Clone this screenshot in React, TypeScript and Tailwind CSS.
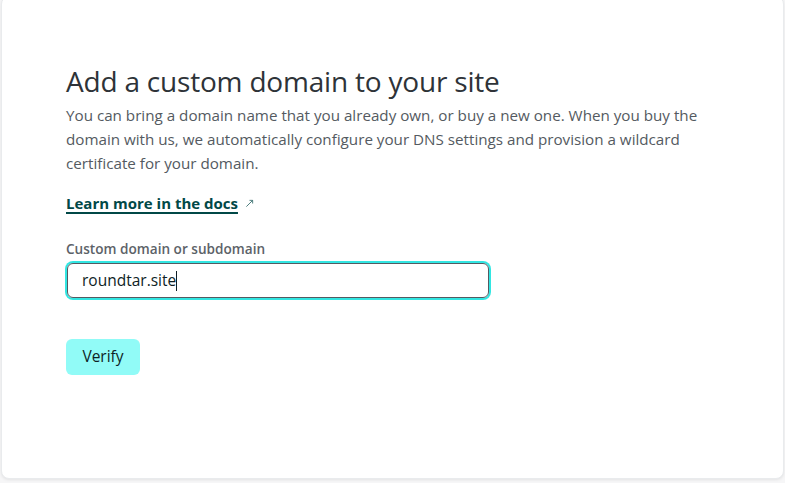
export default function App() {
    return (
        <div className="min-h-screen bg-[#f6f6f7] font-['Open_Sans',sans-serif]">
            <div className="h-[483px] flex flex-col px-[1px]">
                <div className="h-[483px] -mt-[4px] bg-white rounded-lg border border-[#e9ebed] shadow-[0_1px_3px_rgba(0,0,0,0.08)]">
                    <div className="pt-[66px] pl-[64px]">
                        <h1 className="text-[28px] leading-[36px] text-[#2e3338] tracking-[-0.2px]">
                            Add a custom domain to your site
                        </h1>
                        <p className="mt-[4px] w-[670px] text-[15.2px] leading-[24px] text-[#545a61]">
                            You can bring a domain name that you already own, or buy a new one. When you buy the domain with us, we automatically configure your DNS settings and provision a wildcard certificate for your domain.
                        </p>
                        <div className="mt-[16px] flex items-center gap-[7px]">
                            <a className="text-[15px] leading-[24px] font-bold text-[#014847] underline underline-offset-[3px] decoration-[1.5px]">
                                Learn more in the docs
                            </a>
                            <svg width="9" height="9" viewBox="0 0 10 10" className="text-[#3b7070] mt-[1px]">
                                <path d="M1.5 8.5L8.5 1.5M5 1.5H8.5V5" fill="none" stroke="currentColor" strokeWidth="1" />
                            </svg>
                        </div>
                        <label className="block mt-[24px] text-[13.6px] leading-[20px] font-semibold text-[#5c6268]">
                            Custom domain or subdomain
                        </label>
                        <div className="mt-[4px] ml-[1px] w-[422px] h-[35px] rounded-[6px] border border-[#545a61] ring-2 ring-[#32e6e2] flex items-center pl-[14px] text-[15.5px] text-[#0e1e25]">
                            roundtar.site<span className="inline-block w-px h-[20px] bg-[#0e1e25]" />
                        </div>
                        <button className="mt-[41px] h-[36px] w-[74px] rounded-[6px] bg-[#91fbf7] text-[15.5px] text-[#0e1e25] font-medium">
                            Verify
                        </button>
                    </div>
                </div>
            </div>
        </div>
    );
}
